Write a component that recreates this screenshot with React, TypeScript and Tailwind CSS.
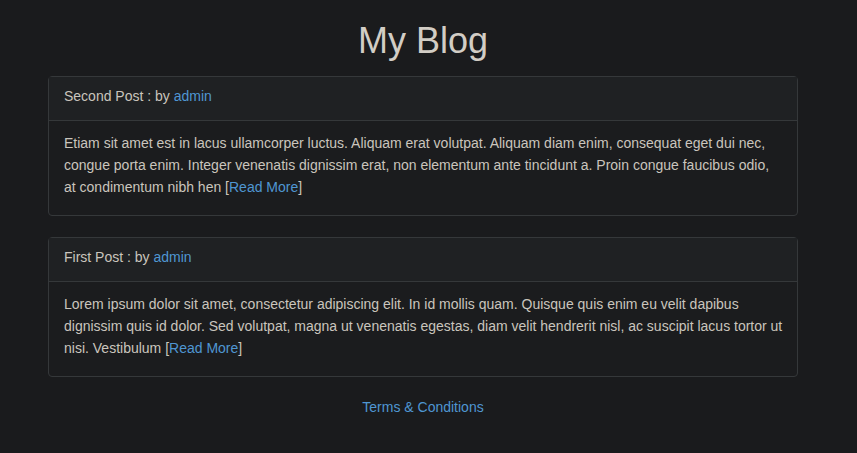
import React from 'react';

interface Post {
  title: string;
  author: string;
  excerpt: string;
}

const posts: Post[] = [
  {
    title: 'Second Post',
    author: 'admin',
    excerpt:
      'Etiam sit amet est in lacus ullamcorper luctus. Aliquam erat volutpat. Aliquam diam enim, consequat eget dui nec, congue porta enim. Integer venenatis dignissim erat, non elementum ante tincidunt a. Proin congue faucibus odio, at condimentum nibh hen',
  },
  {
    title: 'First Post',
    author: 'admin',
    excerpt:
      'Lorem ipsum dolor sit amet, consectetur adipiscing elit. In id mollis quam. Quisque quis enim eu velit dapibus dignissim quis id dolor. Sed volutpat, magna ut venenatis egestas, diam velit hendrerit nisl, ac suscipit lacus tortor ut nisi. Vestibulum',
  },
];

function PostCard({ post }: { post: Post }) {
  return (
    <div className="rounded-[4px] border border-[#35383a] bg-[#1b1c1e]">
      {/* Header */}
      <div className="border-b border-[#35383a] bg-[#1f2123] px-[15px] pt-[9px] pb-[13px] text-[14px] leading-[21px]">
        {post.title} : by{' '}
        <a href="#" className="text-[#4f96d2]">
          {post.author}
        </a>
      </div>

      {/* Body */}
      <div className="pl-[15px] pr-[13px] pt-[11px] pb-[17px] text-[14px] leading-[22px]">
        {post.excerpt} [
        <a href="#" className="text-[#4f96d2]">
          Read More
        </a>
        ]
      </div>
    </div>
  );
}

export default function App() {
  return (
    <div
      className="min-h-screen bg-[#1a1b1d] text-[#cac5bd]"
      style={{ fontFamily: '"Liberation Sans", Arial, sans-serif' }}
    >
      <div className="ml-[48px] w-[750px] pb-8">
        <h1 className="pt-[17px] pb-[11px] text-center text-[36px] leading-[48px] text-[#d2cdc5]">
          My Blog
        </h1>

        <div className="flex flex-col gap-[21px]">
          {posts.map((post) => (
            <PostCard key={post.title} post={post} />
          ))}
        </div>

        <div className="pt-[19px] text-center text-[14px] leading-[22px]">
          <a href="#" className="text-[#4f96d2]">
            Terms &amp; Conditions
          </a>
        </div>
      </div>
    </div>
  );
}
